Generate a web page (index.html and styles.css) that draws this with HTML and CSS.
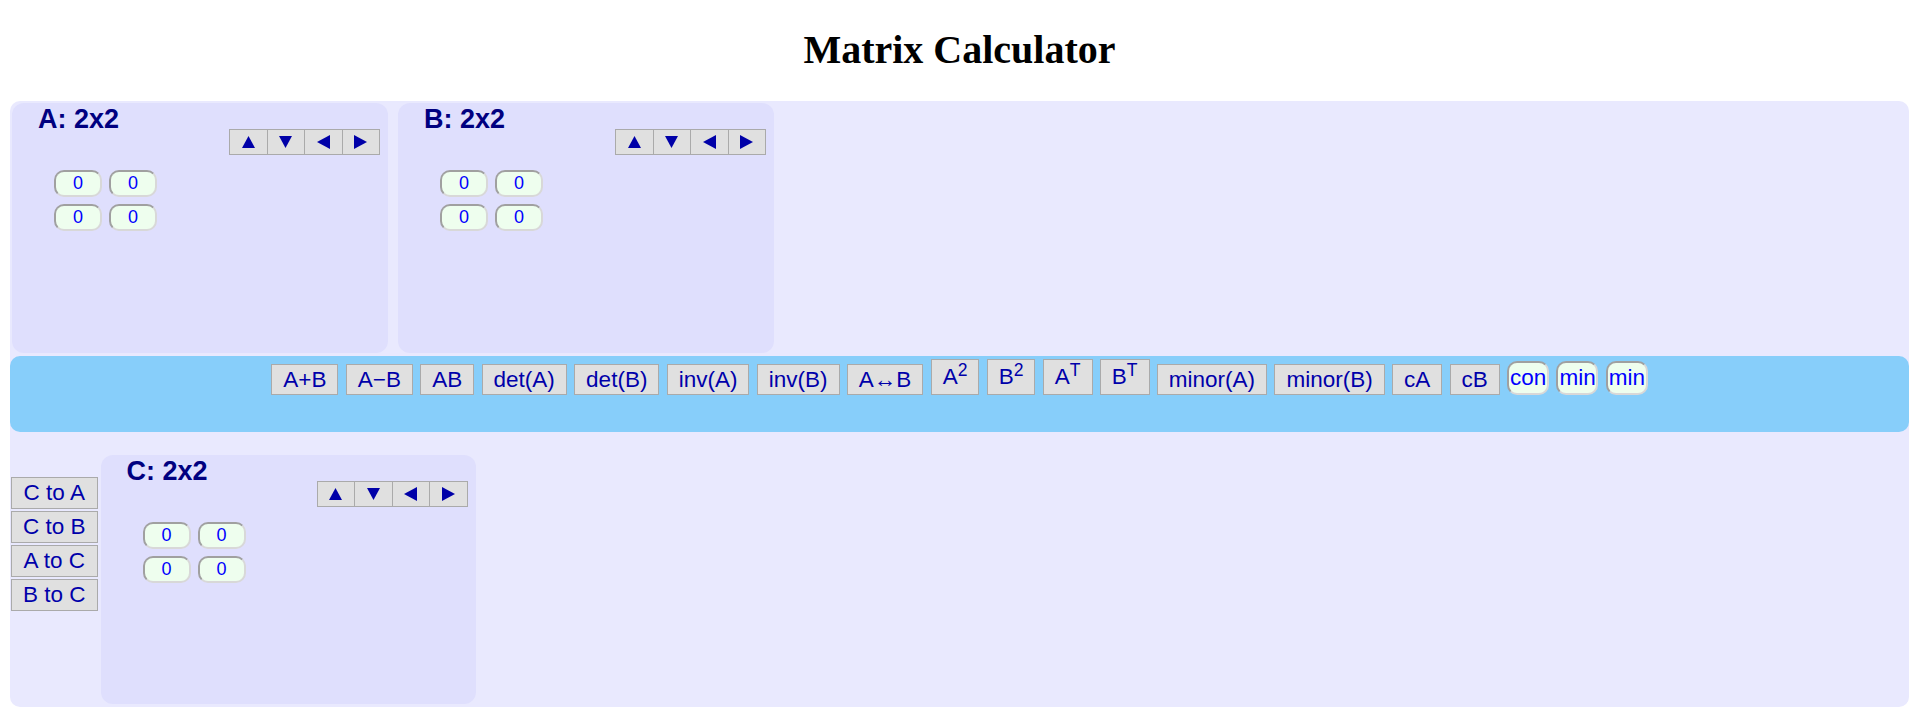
FILE: index.html
```html
<!DOCTYPE html>
<html>
<head>
<meta charset="utf-8">
<title>Matrix Calculator</title>
<link rel="stylesheet" href="styles.css">
</head>
<body>
<h1 class="page-title">Matrix Calculator</h1>
<div class="calc">
  <div class="top-row">
    <div class="panel">
      <div class="panel-title">A: 2x2</div>
      <div class="arrows">
        <button class="arrow"><svg width="13" height="12" viewBox="0 0 13 12"><polygon points="0,12 6.5,0 13,12"/></svg></button>
        <button class="arrow"><svg width="13" height="12" viewBox="0 0 13 12"><polygon points="0,0 13,0 6.5,12"/></svg></button>
        <button class="arrow"><svg width="13" height="14" viewBox="0 0 13 14"><polygon points="13,0 13,14 0,7"/></svg></button>
        <button class="arrow"><svg width="13" height="14" viewBox="0 0 13 14"><polygon points="0,0 13,7 0,14"/></svg></button>
      </div>
      <div class="grid">
        <input class="cell" type="text" value="0">
        <input class="cell" type="text" value="0">
        <input class="cell" type="text" value="0">
        <input class="cell" type="text" value="0">
      </div>
    </div>
    <div class="panel">
      <div class="panel-title">B: 2x2</div>
      <div class="arrows">
        <button class="arrow"><svg width="13" height="12" viewBox="0 0 13 12"><polygon points="0,12 6.5,0 13,12"/></svg></button>
        <button class="arrow"><svg width="13" height="12" viewBox="0 0 13 12"><polygon points="0,0 13,0 6.5,12"/></svg></button>
        <button class="arrow"><svg width="13" height="14" viewBox="0 0 13 14"><polygon points="13,0 13,14 0,7"/></svg></button>
        <button class="arrow"><svg width="13" height="14" viewBox="0 0 13 14"><polygon points="0,0 13,7 0,14"/></svg></button>
      </div>
      <div class="grid">
        <input class="cell" type="text" value="0">
        <input class="cell" type="text" value="0">
        <input class="cell" type="text" value="0">
        <input class="cell" type="text" value="0">
      </div>
    </div>
  </div>
  <div class="band">
    <div class="ops">
      <button class="op">A+B</button>
      <button class="op">A&minus;B</button>
      <button class="op">AB</button>
      <button class="op">det(A)</button>
      <button class="op">det(B)</button>
      <button class="op">inv(A)</button>
      <button class="op">inv(B)</button>
      <button class="op">A&harr;B</button>
      <button class="op op-sup">A<sup>2</sup></button>
      <button class="op op-sup">B<sup>2</sup></button>
      <button class="op op-sup">A<sup>T</sup></button>
      <button class="op op-sup">B<sup>T</sup></button>
      <button class="op">minor(A)</button>
      <button class="op">minor(B)</button>
      <button class="op">cA</button>
      <button class="op">cB</button>
      <input class="param" type="text" value="con">
      <input class="param" type="text" value="min">
      <input class="param" type="text" value="min">
    </div>
  </div>
  <div class="bottom-row">
    <div class="side">
      <button class="side-btn">C to A</button>
      <button class="side-btn">C to B</button>
      <button class="side-btn">A to C</button>
      <button class="side-btn">B to C</button>
    </div>
    <div class="panel panel-c">
      <div class="panel-title">C: 2x2</div>
      <div class="arrows">
        <button class="arrow"><svg width="13" height="12" viewBox="0 0 13 12"><polygon points="0,12 6.5,0 13,12"/></svg></button>
        <button class="arrow"><svg width="13" height="12" viewBox="0 0 13 12"><polygon points="0,0 13,0 6.5,12"/></svg></button>
        <button class="arrow"><svg width="13" height="14" viewBox="0 0 13 14"><polygon points="13,0 13,14 0,7"/></svg></button>
        <button class="arrow"><svg width="13" height="14" viewBox="0 0 13 14"><polygon points="0,0 13,7 0,14"/></svg></button>
      </div>
      <div class="grid">
        <input class="cell" type="text" value="0">
        <input class="cell" type="text" value="0">
        <input class="cell" type="text" value="0">
        <input class="cell" type="text" value="0">
      </div>
    </div>
  </div>
</div>
</body>
</html>
```

FILE: styles.css
```css
html, body {
  margin: 0;
  background: #ffffff;
}
body {
  padding: 0 11px 0 10px;
  font-family: "Liberation Sans", Arial, sans-serif;
}
.page-title {
  font-family: "Liberation Serif", "Times New Roman", serif;
  font-size: 40px;
  font-weight: bold;
  line-height: 44px;
  text-align: center;
  margin: 28px 0 29px;
  color: #000;
}
.calc {
  background: #e9e9fe;
  border-radius: 10px;
}
.top-row {
  display: flex;
  gap: 10px;
  padding: 2px 2px 3px;
}
.panel {
  width: 376px;
  height: 250px;
  box-sizing: border-box;
  background: #dfdffd;
  border-radius: 12px;
}
.panel-title {
  font-size: 27px;
  font-weight: bold;
  color: #000080;
  line-height: 27px;
  height: 23px;
  padding: 3px 0 0 26px;
}
.arrows {
  display: flex;
  justify-content: flex-end;
  margin-right: 8px;
}
.arrow {
  width: 38.5px;
  height: 26px;
  box-sizing: border-box;
  margin: 0;
  padding: 0;
  background: #e0e0e0;
  border: 1px solid #aaaaaa;
  display: flex;
  align-items: center;
  justify-content: center;
}
.arrow + .arrow {
  margin-left: -1px;
}
.arrow svg {
  fill: #0000a8;
  display: block;
}
.grid {
  display: grid;
  grid-template-columns: 48px 48px;
  gap: 7px;
  margin: 15px 0 0 42px;
}
.cell, .param {
  box-sizing: border-box;
  margin: 0;
  padding: 0;
  background: #eefeee;
  color: #0000ff;
  border: 2px solid;
  border-color: #a0a0a0 #d8d8d8 #d8d8d8 #a0a0a0;
  border-radius: 10px;
  font-family: "Liberation Sans", Arial, sans-serif;
  outline: none;
}
.cell {
  width: 48px;
  height: 27px;
  font-size: 18px;
  text-align: center;
}
.band {
  height: 76px;
  box-sizing: border-box;
  background: #87cefa;
  border-radius: 10px;
  padding-top: 3px;
}
.ops {
  display: flex;
  justify-content: center;
  align-items: flex-end;
  gap: 7.3px;
}
.op, .side-btn {
  margin: 0;
  height: 31px;
  padding: 0 11px;
  box-sizing: border-box;
  background: #e0e0e0;
  border: 1px solid #aaaaaa;
  color: #0000aa;
  font-family: "Liberation Sans", Arial, sans-serif;
  font-size: 22.5px;
  white-space: nowrap;
}
.op-sup {
  height: 36px;
}
.op sup {
  font-size: 0.78em;
  line-height: 0;
}
.param {
  width: 42px;
  height: 34px;
  font-size: 22.5px;
  padding: 0 1px;
  text-align: left;
}
.bottom-row {
  display: flex;
  align-items: flex-start;
  padding: 23px 0 3px;
}
.side {
  display: flex;
  flex-direction: column;
  gap: 2px;
  margin: 22px 3px 0 1px;
}
.side-btn {
  height: 32px;
}
.panel-c {
  width: 375px;
  height: 249px;
}
```
